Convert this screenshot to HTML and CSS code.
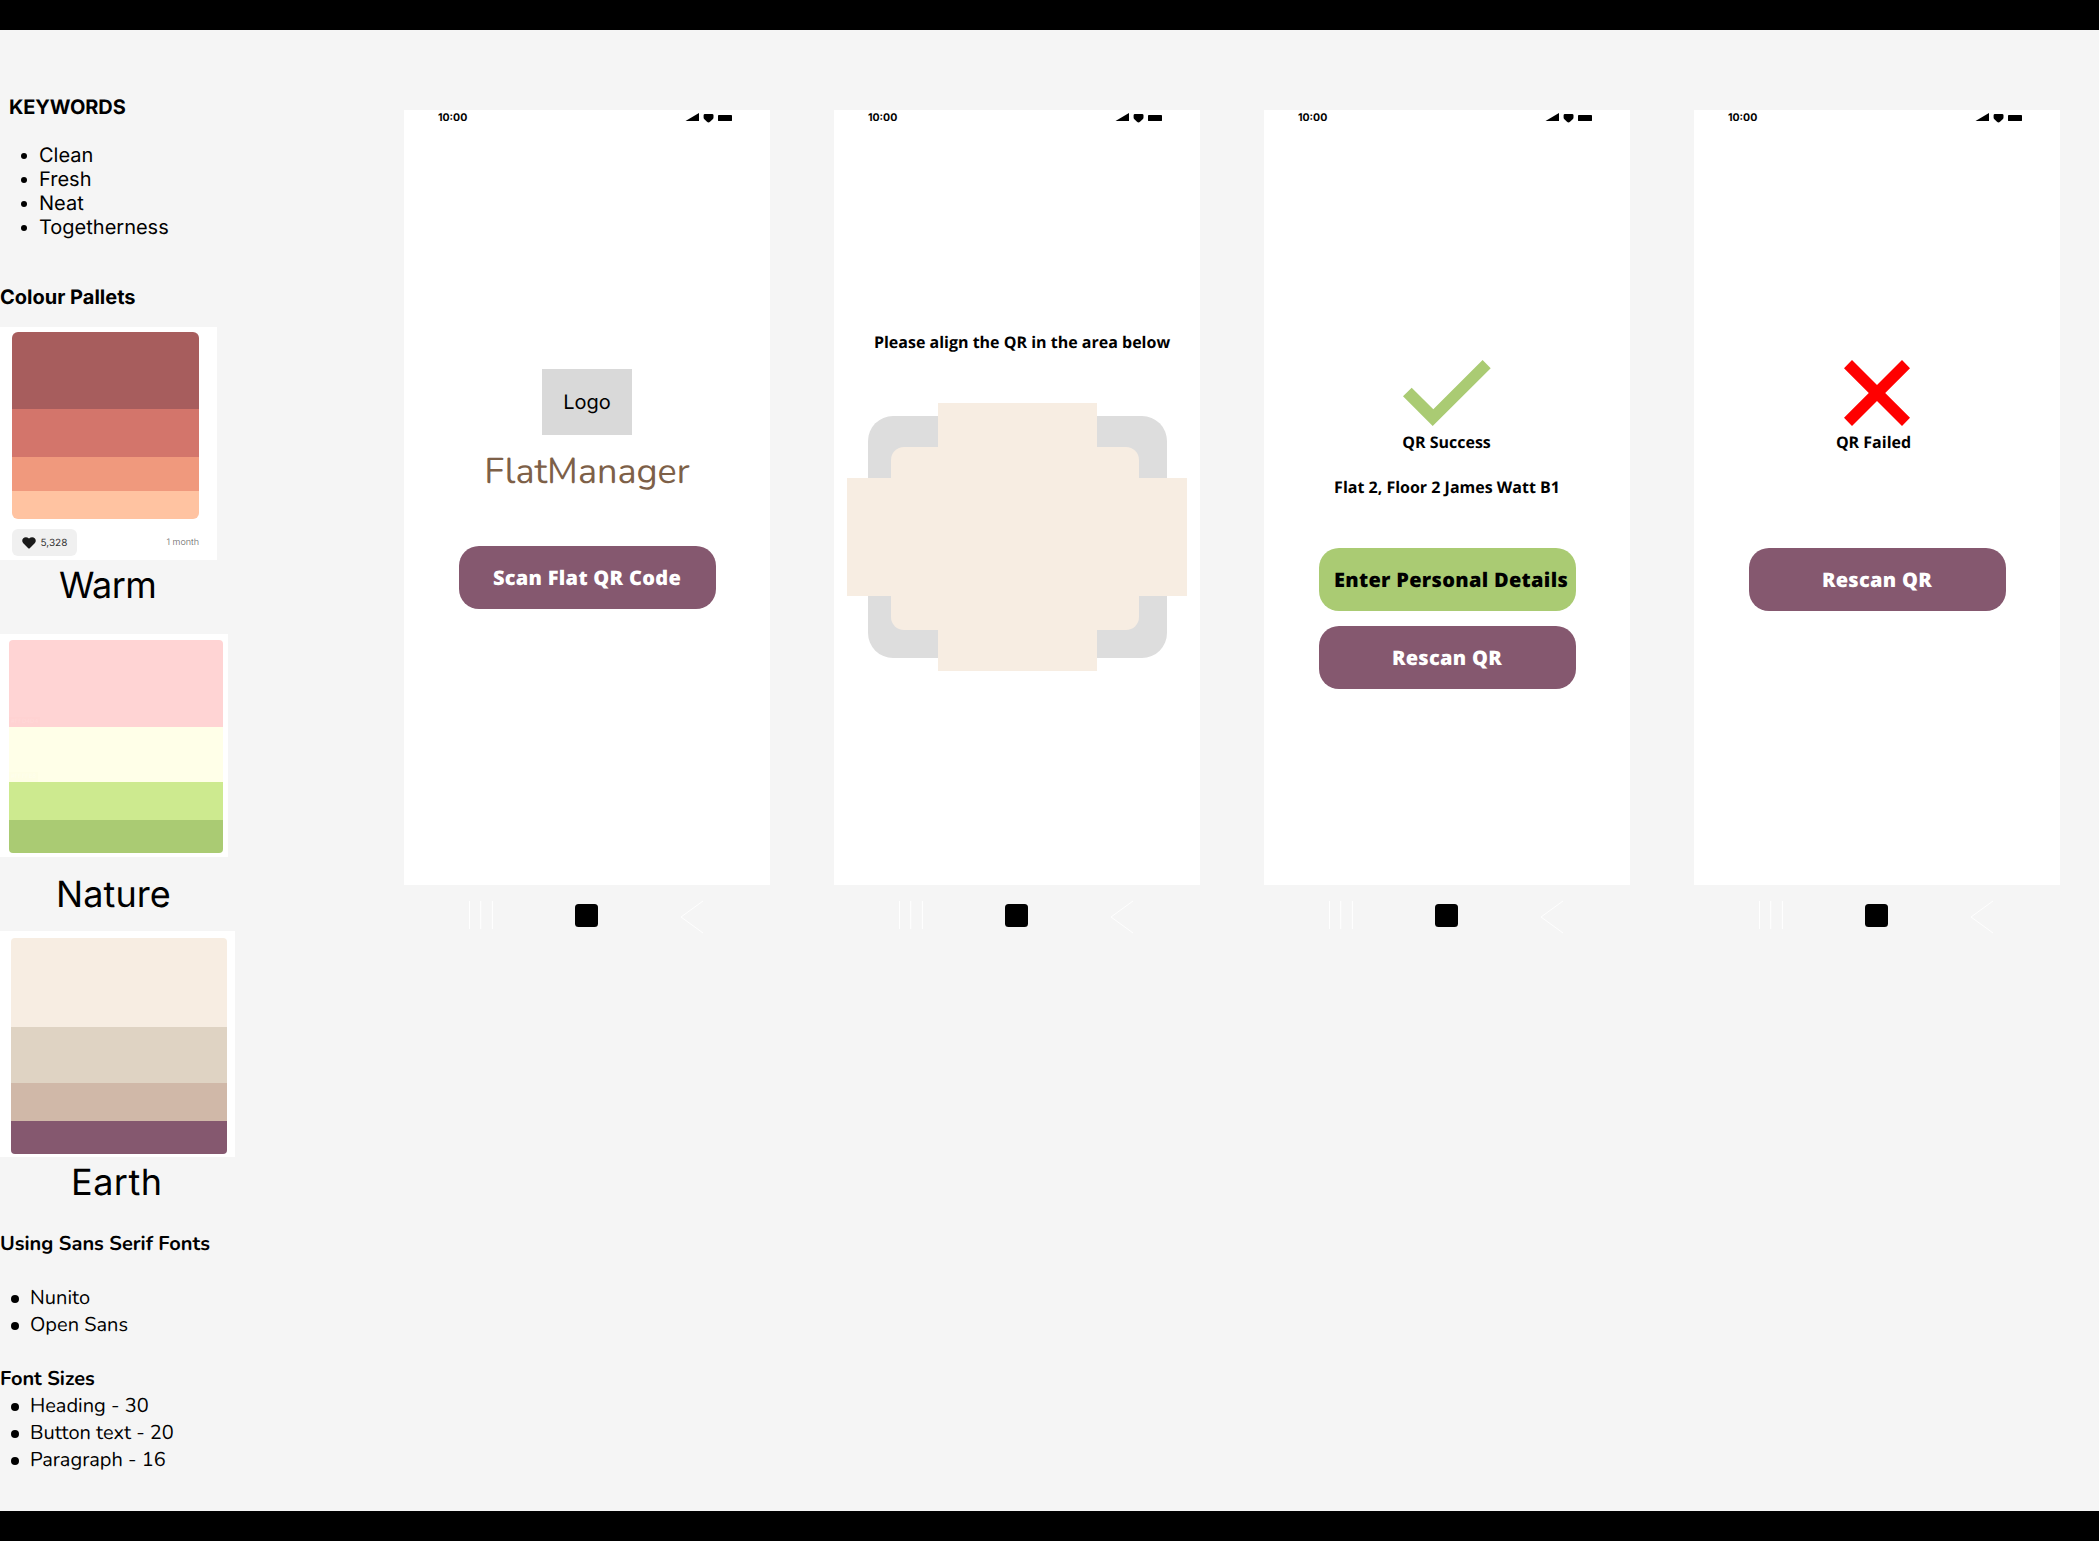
FILE: index.html
```html
<!DOCTYPE html>
<html lang="en">
<head>
<meta charset="utf-8">
<title>FlatManager moodboard</title>
<link rel="stylesheet" href="styles.css">
</head>
<body>
<svg class="defs" width="0" height="0" aria-hidden="true">
  <symbol id="status" viewBox="0 0 48 12"><path d="M.5 9 14 1v8zM18.6 3.2Q18.6 2 20 2h7q1.500 0 1.500 1.200v2.300q0 1-.8 1.800L25 9.800q-1.500 1.200-3 0l-2.600-2.500q-.8-.8-.8-1.800z"/><rect x="33" y="3" width="14" height="6" rx=".4"/></symbol>
  <symbol id="nav" viewBox="0 0 366 40"><path d="M65.500 5v28M76.700 5v28M88.400 5v28M299 5l-22 16 22 16" fill="none" stroke="#fff" stroke-width="1"/><rect x="171" y="8" width="23" height="23" rx="3.500"/></symbol>
</svg>
<div class="board">
  <aside class="guide">
    <h2 class="title keywords">KEYWORDS</h2>
    <ul class="list words"><li>Clean</li><li>Fresh</li><li>Neat</li><li>Togetherness</li></ul>
    <h2 class="title pallets">Colour Pallets</h2>
    <section class="card warm">
      <div class="swatch"><i></i><i></i><i></i><i></i></div>
      <div class="meta">
        <span class="likes"><svg width="14" height="12" viewBox="0 0 14 12"><path d="M7 11.500Q6.500 11.500 6 11L1.300 6.300C-2 2.500 3-2 7 1.600 11-2 16 2.500 12.700 6.300L8 11Q7.500 11.500 7 11.500z" fill="#1a1a1a"/></svg><span class="count">5,328</span></span>
        <span class="age">1 month</span>
      </div>
    </section>
    <p class="label label-warm">Warm</p>
    <section class="card nature"><div class="swatch"><i><b class="hex hex-pink">#FFD4D4</b></i><i><b class="hex hex-cream">#FFFFE8</b></i><i></i><i></i></div></section>
    <p class="label label-nature">Nature</p>
    <section class="card earth"><div class="swatch"><i></i><i></i><i></i><i></i></div></section>
    <p class="label label-earth">Earth</p>
    <div class="type">
      <h3 class="using">Using Sans Serif Fonts</h3>
      <ul class="list fonts"><li>Nunito</li><li>Open Sans</li></ul>
      <h3 class="sizes-title">Font Sizes</h3>
      <ul class="list sizes"><li>Heading - 30</li><li>Button text - 20</li><li>Paragraph - 16</li></ul>
    </div>
  </aside>
  <main class="screens">
    <article class="phone">
      <div class="screen">
        <header class="status"><span>10:00</span><svg width="48" height="12"><use href="#status"/></svg></header>
        <div class="logo">Logo</div>
        <h1 class="brand">FlatManager</h1>
        <button class="btn scan"><span>Scan Flat QR Code</span></button>
      </div>
      <svg class="nav" width="366" height="40"><use href="#nav"/></svg>
    </article>
    <article class="phone">
      <div class="screen">
        <header class="status"><span>10:00</span><svg width="48" height="12"><use href="#status"/></svg></header>
        <p class="msg align">Please align the QR in the area below</p>
        <svg class="finder" width="340" height="268" viewBox="0 0 340 268"><rect x="21" y="13" width="299" height="242" rx="25" fill="#ddd"/><g fill="#f7ede2"><rect x="44" y="44" width="248" height="183" rx="13"/><path d="M91 0h159v268H91zM0 75h340v118H0z"/></g></svg>
      </div>
      <svg class="nav" width="366" height="40"><use href="#nav"/></svg>
    </article>
    <article class="phone">
      <div class="screen">
        <header class="status"><span>10:00</span><svg width="48" height="12"><use href="#status"/></svg></header>
        <svg class="result" width="88" height="66" viewBox="0 0 88 66"><path d="M0 36.300 8.700 27.700 30.300 49.200 79.600 0 87.700 8.300 29.700 66z" fill="#aacb73"/></svg>
        <p class="msg success">QR Success</p>
        <p class="msg flat">Flat 2, Floor 2 James Watt B1</p>
        <button class="btn details"><span>Enter Personal Details</span></button>
        <button class="btn rescan"><span>Rescan QR</span></button>
      </div>
      <svg class="nav" width="366" height="40"><use href="#nav"/></svg>
    </article>
    <article class="phone">
      <div class="screen">
        <header class="status"><span>10:00</span><svg width="48" height="12"><use href="#status"/></svg></header>
        <svg class="result" width="66" height="66" viewBox="0 0 66 66"><path d="M8 0 33 24.900 58 0l8 8.200L41.200 33 66 57.800 58 66 33 41.100 8 66l-8-8.200L24.800 33 0 8.200z" fill="#f00"/></svg>
        <p class="msg failed">QR Failed</p>
        <button class="btn retry"><span>Rescan QR</span></button>
      </div>
      <svg class="nav" width="366" height="40"><use href="#nav"/></svg>
    </article>
  </main>
</div>
</body>
</html>
```
FILE: styles.css
```css
* { box-sizing: border-box; margin: 0; padding: 0; }
html { overflow: hidden; }
body { height: 1541px; background: #000; padding: 30px 0; font-family: Inter, sans-serif; color: #000; text-rendering: geometricPrecision; }
.defs { display: block; height: 0; }
.board { display: flex; height: 1481px; background: #f5f5f5; overflow: hidden; }
.guide { width: 404px; flex: none; padding-top: 65px; }
.title { font-size: 20px; line-height: 24px; font-weight: 700; }
.keywords { padding-left: 9px; letter-spacing: -.1px; }
.pallets { margin-top: 46px; }
.list { list-style: none; font-size: 20px; line-height: 24px; }
.list li { display: flex; align-items: center; }
.list li::before { content: ""; border-radius: 50%; background: #000; flex: none; }
.words { margin-top: 24px; padding-left: 21px; }
.words li::before { width: 6px; height: 6px; margin: 2px 12px 0 0; }

.card { background: #fff; }
.swatch { display: grid; overflow: hidden; border-radius: 4px; }
.warm { width: 217px; height: 233px; margin-top: 18px; padding: 5px 18px 0 12px; }
.warm .swatch { height: 187px; grid-template-rows: 76.5px 48.5px 34px 28px; border-radius: 6px; }
.nature { width: 228px; height: 223px; margin-top: 27px; padding: 5.5px 5px 0 9px; }
.nature .swatch { height: 213.5px; grid-template-rows: 87.5px 55px 38px 33px; }
.earth { width: 235px; height: 226px; margin-top: 15px; padding: 7px 8px 0 11px; }
.earth .swatch { height: 216px; grid-template-rows: 89px 56px 38px 33px; }
.warm i:nth-child(1) { background: #a75d5d; }
.warm i:nth-child(2) { background: #d3756b; }
.warm i:nth-child(3) { background: #f0997d; }
.warm i:nth-child(4) { background: #ffc3a1; }
.nature i { display: flex; align-items: flex-end; font-style: normal; }
.nature i:nth-child(1) { background: #ffd4d4; }
.nature i:nth-child(2) { background: #ffffe8; }
.nature i:nth-child(3) { background: #cdea8f; }
.nature i:nth-child(4) { background: #aacb73; }
.hex { height: 10px; padding: 0 2px; font-size: 6px; line-height: 10px; font-weight: 400; }
.hex-pink { background: #ffd2d2; color: #ffd8d8; }
.hex-cream { background: #fefee5; color: #ffffee; }
.earth i:nth-child(1) { background: #f7ede2; }
.earth i:nth-child(2) { background: #dfd3c3; }
.earth i:nth-child(3) { background: #d0b8a8; }
.earth i:nth-child(4) { background: #85586f; }
.meta { display: flex; justify-content: space-between; align-items: center; margin-top: 10px; height: 27px; }
.likes { display: flex; align-items: center; gap: 5px; width: 65px; height: 27px; padding-left: 9.5px; border-radius: 6px; background: #f0f0f0; font-size: 10px; color: #333; }
.age { font-size: 9px; font-weight: 300; color: #666; }
.label { font-size: 36px; line-height: 44px; white-space: nowrap; }
.label-warm { margin-top: 3px; padding-left: 59px; letter-spacing: -.6px; }
.label-nature { margin-top: 15px; padding-left: 56px; letter-spacing: .1px; }
.label-earth { margin-top: 3px; padding-left: 71px; letter-spacing: .5px; }

.type { margin-top: 27px; font-family: Nunito, Lato, sans-serif; font-size: 20px; line-height: 27px; }
.type h3 { font-size: 20px; font-weight: 700; }
.type .list { line-height: 27px; padding-left: 11px; }
.type li::before { width: 8px; height: 8px; margin: 0 11px 0 0; }
.fonts { margin: 27px 0; }

.screens { display: flex; gap: 64px; padding-top: 80px; }
.phone { width: 366px; flex: none; }
.screen { display: flex; flex-direction: column; align-items: center; height: 775px; background: #fff; }
.status { display: flex; justify-content: space-between; width: 100%; height: 14px; padding: 0 37px 0 34px; font-size: 10.5px; line-height: 16px; font-weight: 700; }
.status svg { margin-top: 2px; }
.nav { display: block; margin-top: 11px; }
.logo { display: grid; place-items: center; width: 90px; height: 66px; margin-top: 245px; background: #d9d9d9; font-size: 20px; line-height: 24px; }
.brand { margin-top: 13px; font: 400 36px/48px Nunito, Lato, sans-serif; color: #7d6048; white-space: nowrap; }
.btn { display: grid; place-items: center; width: 257px; height: 63px; flex: none; border: 0; border-radius: 20px; background: #85586f; color: #fff; font: 800 20px/27px "Open Sans", sans-serif; letter-spacing: .3px; text-rendering: inherit; white-space: nowrap; }
.scan { margin-top: 50px; }
.msg { font: 700 16px/22px "Open Sans", sans-serif; white-space: nowrap; }
.align { margin-top: 207px; padding-left: 10px; }
.finder { margin-top: 50px; }
.result { display: block; margin-top: 236px; flex: none; }
.success, .failed { margin-top: 5px; }
.success { padding-right: 1px; }
.failed { padding-right: 7px; }
.flat { margin-top: 23px; }
.details { margin-top: 50px; background: #aacb73; color: #000; }
.details span { padding-left: 8px; }
.rescan { margin-top: 15px; }
.retry { margin-top: 95px; }
```
